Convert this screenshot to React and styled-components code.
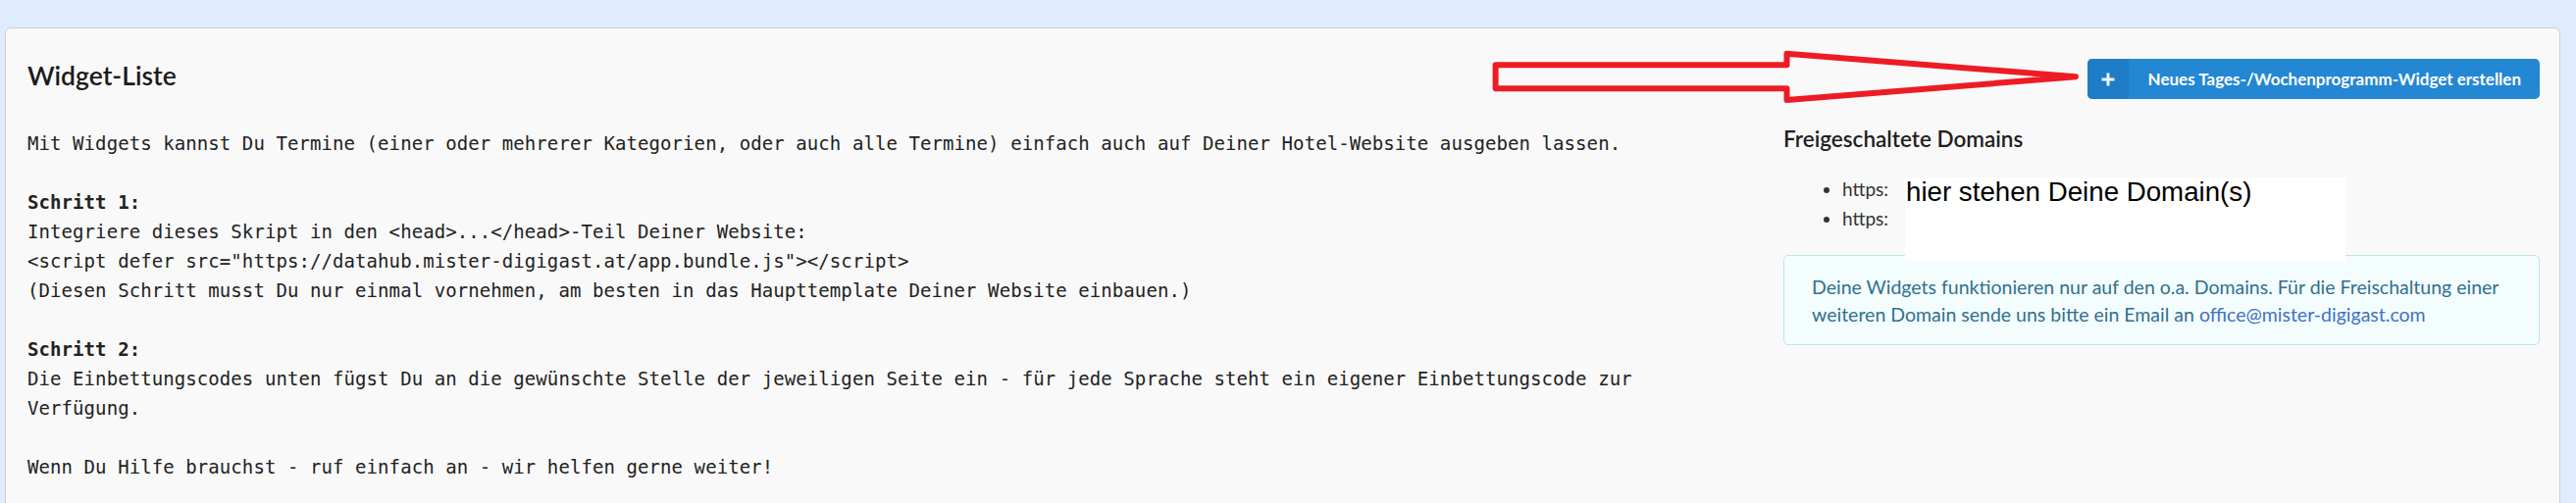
import React from 'react';
import styled, { createGlobalStyle } from 'styled-components';

const Global = createGlobalStyle`
  html, body { margin: 0; padding: 0; background: #deecfd; }
  body { font-family: Lato, "Open Sans", sans-serif; }
`;

const Page = styled.div`
  padding: 28px 16px 0 5px;
`;

const Card = styled.section`
  position: relative;
  background: #f9f9f9;
  border: 1px solid #cfcfcf;
  border-radius: 6px;
  padding: 31px 20px 80px 22px;
`;

const Header = styled.div`
  display: flex;
  justify-content: space-between;
  align-items: flex-start;
`;

const Title = styled.h2`
  margin: -1px 0 0;
  font-family: Lato, sans-serif;
  font-weight: 600;
  font-size: 26.5px;
  line-height: 36px;
  color: #1b1b1b;
`;

const AddButton = styled.button`
  display: flex;
  align-items: stretch;
  height: 41px;
  padding: 0;
  border: none;
  border-radius: 5px;
  overflow: hidden;
  background: #2387d3;
  color: #fff;
  cursor: pointer;
  font-family: Lato, sans-serif;
  font-weight: 700;
  font-size: 17px;
`;

const ButtonIcon = styled.span`
  width: 42px;
  display: flex;
  align-items: center;
  justify-content: center;
  background: #1f7cc6;
`;

const ButtonLabel = styled.span`
  display: flex;
  align-items: center;
  padding: 0 19px 0 20px;
`;

const Body = styled.div`
  display: grid;
  grid-template-columns: 1fr 771px;
  column-gap: 50px;
  margin-top: 30px;
`;

const Intro = styled.div`
  display: flex;
  flex-direction: column;
  gap: 30px;
  font-family: "DejaVu Sans Mono", "Liberation Mono", monospace;
  font-size: 19px;
  letter-spacing: 0.08px;
  line-height: 30px;
  color: #222;
`;

const Paragraph = styled.p`
  margin: 0;
`;

const Step = styled.strong`
  font-weight: 700;
`;

const Side = styled.aside`
  display: flex;
  flex-direction: column;
`;

const SideTitle = styled.h4`
  margin: 0;
  font-family: Lato, sans-serif;
  font-weight: 600;
  font-size: 22.5px;
  line-height: 22px;
  color: #1f1f1f;
`;

const DomainList = styled.ul`
  margin: 25px 0 22px;
  padding-left: 60px;
  font-family: Lato, sans-serif;
  font-size: 19px;
  line-height: 30px;
  color: #333;
`;

const DomainItem = styled.li`
  width: fit-content;
`;

const InfoBox = styled.div`
  border: 1px solid #bde3ec;
  background: #f4fdfd;
  border-radius: 5px;
  padding: 18px 24px 16px 28px;
  font-family: Lato, sans-serif;
  font-size: 19.5px;
  line-height: 28px;
  color: #31708f;
`;

const InfoLine = styled.span`
  display: block;
`;

const MailLink = styled.a`
  color: #3e72c4;
  text-decoration: none;
`;

const ArrowOverlay = styled.svg`
  position: absolute;
  left: 1504px;
  top: 16px;
  overflow: visible;
  pointer-events: none;
`;

const DomainMask = styled.div`
  position: absolute;
  left: 1936px;
  top: 152px;
  width: 449px;
  height: 85px;
  background: #fff;
  font-family: "Liberation Sans", Arial, sans-serif;
  font-size: 27.7px;
  line-height: 30px;
  color: #000;
  padding-left: 1px;
  box-sizing: border-box;
`;

export default function App() {
  return (
    <>
      <Global />
      <Page>
        <Card>
          <Header>
            <Title>Widget-Liste</Title>
            <AddButton>
              <ButtonIcon>
                <svg width="16" height="16" viewBox="0 0 16 16">
                  <path d="M8 1.5v13M1.5 8h13" stroke="#eef5fc" strokeWidth="3" />
                </svg>
              </ButtonIcon>
              <ButtonLabel>Neues Tages-/Wochenprogramm-Widget erstellen</ButtonLabel>
            </AddButton>
          </Header>
          <Body>
            <Intro>
              <Paragraph>
                Mit Widgets kannst Du Termine (einer oder mehrerer Kategorien, oder auch alle Termine) einfach auch auf Deiner Hotel-Website ausgeben lassen.
              </Paragraph>
              <Paragraph>
                <Step>Schritt 1:</Step>
                <br />
                {'Integriere dieses Skript in den <head>...</head>-Teil Deiner Website:'}
                <br />
                {'<script defer src="https://datahub.mister-digigast.at/app.bundle.js"></script>'}
                <br />
                (Diesen Schritt musst Du nur einmal vornehmen, am besten in das Haupttemplate Deiner Website einbauen.)
              </Paragraph>
              <Paragraph>
                <Step>Schritt 2:</Step>
                <br />
                Die Einbettungscodes unten fügst Du an die gewünschte Stelle der jeweiligen Seite ein - für jede Sprache steht ein eigener Einbettungscode zur Verfügung.
              </Paragraph>
              <Paragraph>Wenn Du Hilfe brauchst - ruf einfach an - wir helfen gerne weiter!</Paragraph>
            </Intro>
            <Side>
              <SideTitle>Freigeschaltete Domains</SideTitle>
              <DomainList>
                <DomainItem>https:</DomainItem>
                <DomainItem>https:</DomainItem>
              </DomainList>
              <InfoBox>
                <InfoLine>Deine Widgets funktionieren nur auf den o.a. Domains. Für die Freischaltung einer</InfoLine>
                <InfoLine>
                  <span>weiteren Domain sende uns bitte ein Email an </span>
                  <MailLink href="mailto:office@mister-digigast.com">office@mister-digigast.com</MailLink>
                </InfoLine>
              </InfoBox>
            </Side>
          </Body>
          <ArrowOverlay width="620" height="67" viewBox="1510 45 620 67">
            <polygon
              points="1524.6,66.3 1821.5,66.3 1821.5,54.7 2116,78.3 1821.5,102 1821.5,90.3 1524.6,90.3"
              fill="none"
              stroke="#ed1c24"
              strokeWidth="6"
              strokeLinejoin="round"
            />
          </ArrowOverlay>
          <DomainMask>hier stehen Deine Domain(s)</DomainMask>
        </Card>
      </Page>
    </>
  );
}
